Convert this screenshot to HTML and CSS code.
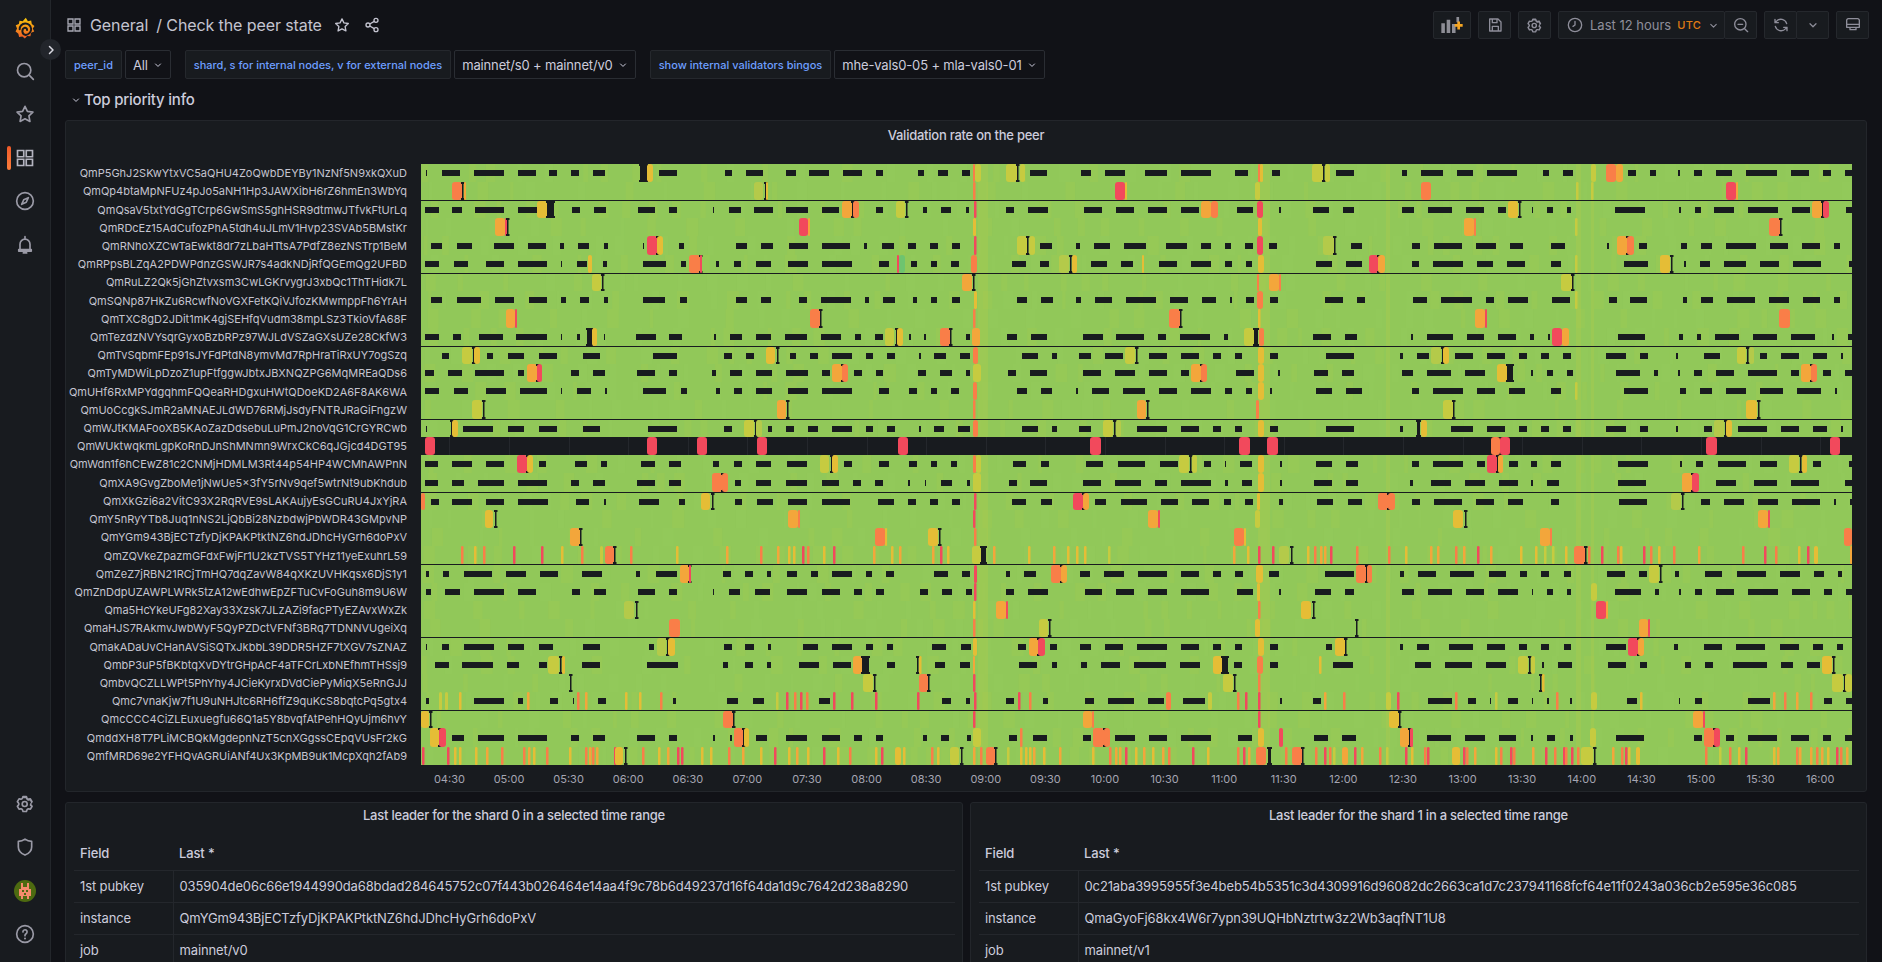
FILE: index.html
```html
<!DOCTYPE html>
<html lang="en">
<head>
    <meta charset="UTF-8">
    <title>Check the peer state - Dashboards - Grafana</title>
    <link rel="stylesheet" href="styles.css">
</head>
<body>
    <svg class="sprite" width="0" height="0">
        <symbol id="i-grid" viewBox="0 0 24 24"><path d="M3 3h7.500v7.500H3zM13.500 3H21v7.500h-7.500zM3 13.500h7.500V21H3zM13.500 13.500H21V21h-7.500z" fill="none" stroke="currentColor" stroke-width="2"/></symbol>
        <symbol id="i-search" viewBox="0 0 24 24"><circle cx="11" cy="11" r="8" fill="none" stroke="currentColor" stroke-width="2"/><path d="M17 17l5 5" stroke="currentColor" stroke-width="2" stroke-linecap="round"/></symbol>
        <symbol id="i-star" viewBox="0 0 24 24"><path d="M12 2.800l2.900 6 6.600.9-4.800 4.600 1.200 6.600-5.900-3.200-5.900 3.200 1.200-6.600-4.800-4.600 6.600-.9z" fill="none" stroke="currentColor" stroke-width="2" stroke-linejoin="round"/></symbol>
        <symbol id="i-share" viewBox="0 0 24 24"><circle cx="18" cy="5" r="3" fill="none" stroke="currentColor" stroke-width="2"/><circle cx="6" cy="12" r="3" fill="none" stroke="currentColor" stroke-width="2"/><circle cx="18" cy="19" r="3" fill="none" stroke="currentColor" stroke-width="2"/><path d="M8.600 10.500l6.800-4M8.600 13.500l6.800 4" stroke="currentColor" stroke-width="2"/></symbol>
        <symbol id="i-compass" viewBox="0 0 24 24"><circle cx="12" cy="12" r="10" fill="none" stroke="currentColor" stroke-width="2"/><path d="M16 8l-2.500 5.500L8 16l2.500-5.500z" fill="none" stroke="currentColor" stroke-width="2" stroke-linejoin="round"/></symbol>
        <symbol id="i-bell" viewBox="0 0 24 24"><path d="M12 2v2M6 17v-6a6 6 0 0 1 12 0v6M4.500 17.500h15v2h-15zM10 21.500h4" fill="none" stroke="currentColor" stroke-width="2" stroke-linecap="round" stroke-linejoin="round"/></symbol>
        <symbol id="i-cog" viewBox="0 0 24 24"><path fill="currentColor" d="M19.900 12.660a1 1 0 0 1 0-1.320l1.280-1.440a1 1 0 0 0 .12-1.170l-2-3.460a1 1 0 0 0-1.070-.48l-1.880.38a1 1 0 0 1-1.150-.66l-.61-1.830a1 1 0 0 0-.95-.68h-4a1 1 0 0 0-1 .68l-.56 1.830a1 1 0 0 1-1.150.66L5 4.790a1 1 0 0 0-1 .48L2 8.730a1 1 0 0 0 .1 1.170l1.270 1.440a1 1 0 0 1 0 1.320L2.100 14.100a1 1 0 0 0-.1 1.170l2 3.460a1 1 0 0 0 1.070.48l1.880-.38a1 1 0 0 1 1.150.66l.61 1.830a1 1 0 0 0 1 .68h4a1 1 0 0 0 .95-.68l.61-1.830a1 1 0 0 1 1.150-.66l1.880.38a1 1 0 0 0 1.070-.48l2-3.460a1 1 0 0 0-.12-1.170ZM18.410 14l.8.9-1.280 2.220-1.180-.24a3 3 0 0 0-3.450 2L12.920 20h-2.560L10 18.860a3 3 0 0 0-3.450-2l-1.180.24-1.300-2.210.8-.9a3 3 0 0 0 0-4l-.8-.9 1.280-2.200 1.180.24a3 3 0 0 0 3.450-2L10.360 5h2.560l.38 1.140a3 3 0 0 0 3.450 2l1.180-.24 1.280 2.220-.8.9a3 3 0 0 0 0 3.980Zm-6.770-6a4 4 0 1 0 4 4 4 4 0 0 0-4-4Zm0 6a2 2 0 1 1 2-2 2 2 0 0 1-2 2Z"/></symbol>
        <symbol id="i-shield" viewBox="0 0 24 24"><path d="M12 2.500c2.500 1.800 5 2.600 8 2.800V12c0 4.500-3.200 7.800-8 9.700C7.200 19.800 4 16.500 4 12V5.300c3-.2 5.500-1 8-2.800z" fill="none" stroke="currentColor" stroke-width="2" stroke-linejoin="round"/></symbol>
        <symbol id="i-help" viewBox="0 0 24 24"><circle cx="12" cy="12" r="10" fill="none" stroke="currentColor" stroke-width="2"/><path d="M9.500 9.500a2.500 2.500 0 1 1 3.800 2.100c-.8.500-1.300 1-1.300 2v.4" fill="none" stroke="currentColor" stroke-width="2" stroke-linecap="round"/><circle cx="12" cy="17.300" r="1.200" fill="currentColor"/></symbol>
        <symbol id="i-down" viewBox="0 0 24 24"><path d="M6 9.500l6 6 6-6" fill="none" stroke="currentColor" stroke-width="2.400" stroke-linecap="round" stroke-linejoin="round"/></symbol>
        <symbol id="i-right" viewBox="0 0 24 24"><path d="M9 5l7 7-7 7" fill="none" stroke="currentColor" stroke-width="3" stroke-linecap="round" stroke-linejoin="round"/></symbol>
        <symbol id="i-save" viewBox="0 0 24 24"><path d="M4 3h12.500L21 7.500V21H4zM8 3v5.500h7V3M8 21v-7h9v7" fill="none" stroke="currentColor" stroke-width="2" stroke-linejoin="round"/></symbol>
        <symbol id="i-clock" viewBox="0 0 24 24"><circle cx="12" cy="12" r="10" fill="none" stroke="currentColor" stroke-width="2"/><path d="M12 6.500V12l-3 2" fill="none" stroke="currentColor" stroke-width="2" stroke-linecap="round"/></symbol>
        <symbol id="i-zoom" viewBox="0 0 24 24"><circle cx="11" cy="11" r="8.500" fill="none" stroke="currentColor" stroke-width="2"/><path d="M7.500 11h7M17.500 17.500l4.500 4.500" stroke="currentColor" stroke-width="2" stroke-linecap="round"/></symbol>
        <symbol id="i-sync" viewBox="0 0 24 24"><path d="M20.500 10A9 9 0 0 0 5 6.500L3 8.500M3.500 14A9 9 0 0 0 19 17.500l2-2M3 3.500v5h5M21 20.500v-5h-5" fill="none" stroke="currentColor" stroke-width="2" stroke-linecap="round" stroke-linejoin="round"/></symbol>
        <symbol id="i-tv" viewBox="0 0 24 24"><path d="M5 2.500h14a2.500 2.500 0 0 1 2.500 2.500v10.500h-19V5A2.500 2.500 0 0 1 5 2.500zM2.500 11h19M7.500 15.500v3.500h9v-3.500" fill="none" stroke="currentColor" stroke-width="2" stroke-linejoin="round"/></symbol>
    </svg>

    <div class="app">
        <nav class="sidebar">
            <div class="side-group">
                <a class="logo">
                    <svg viewBox="0 0 24 28" width="20" height="23">
                        <defs><linearGradient id="flame" x1="0" y1="1" x2="0" y2="0"><stop offset="0" stop-color="#f05a28"/><stop offset="1" stop-color="#fbca0a"/></linearGradient></defs>
                        <path fill="url(#flame)" d="M13 1l2.500 4.200 4-.8.800 4 3.200 2.600-2 3 1.700 3.800-3.800 1.500-.8 4-4-.2-2.800 3-3-2.500-4 .7-.9-4L.500 17.500 2.300 14 .7 10l3.800-1.400.8-3.900 3.900.6z"/>
                        <path fill="none" stroke="#181b1f" stroke-width="2.400" stroke-linecap="round" d="M5.500 15a7 7 0 1 1 7.500 6.800 4.500 4.500 0 0 1-1-8.800 2.600 2.600 0 0 1 2.500 2.800"/>
                    </svg>
                </a>
                <a class="side-item"><svg width="20" height="20"><use href="#i-search"/></svg></a>
                <a class="side-item"><svg width="20" height="20"><use href="#i-star"/></svg></a>
                <a class="side-item current"><svg width="20" height="20"><use href="#i-grid"/></svg></a>
                <a class="side-item"><svg width="20" height="20"><use href="#i-compass"/></svg></a>
                <a class="side-item"><svg width="20" height="20"><use href="#i-bell"/></svg></a>
            </div>
            <div class="side-group">
                <a class="side-item"><svg width="20" height="20"><use href="#i-cog"/></svg></a>
                <a class="side-item"><svg width="20" height="20"><use href="#i-shield"/></svg></a>
                <a class="side-item">
                    <svg viewBox="0 0 22 22" width="22" height="22">
                        <circle cx="11" cy="11" r="11" fill="#4d6a10"/>
                        <path fill="#f58b6c" d="M7 3h2v4h4V3h2v6h2v7h-2v3h-2v-3H9v3H7v-3H5V9h2z"/>
                        <path fill="#4d6a10" d="M8 10h2v2H8zM12 10h2v2h-2zM10 13h2v2h-2z"/>
                    </svg>
                </a>
                <a class="side-item"><svg width="20" height="20"><use href="#i-help"/></svg></a>
            </div>
            <span class="side-toggle"><svg width="12" height="12"><use href="#i-right"/></svg></span>
        </nav>

        <main class="main">
            <header class="toolbar">
                <div class="crumbs">
                    <svg class="crumb-icon" width="16" height="16"><use href="#i-grid"/></svg>
                    <span class="crumb-folder">General</span>
                    <span class="crumb-name">/ Check the peer state</span>
                    <svg class="crumb-star" width="16" height="16"><use href="#i-star"/></svg>
                    <svg class="crumb-share" width="16" height="16"><use href="#i-share"/></svg>
                </div>
                <div class="actions">
                    <button class="tool tool-add">
                        <svg viewBox="0 0 24 18" width="22" height="16">
                            <path fill="#8e8e96" d="M0 7h4v11H0zM6 3h4v15H6zM12 8h4v10h-4zM17 0h3v6h-3z"/>
                            <path fill="#f5a623" d="M18 5h3v3h3v3h-3v3h-3v-3h-3V8h3z"/>
                        </svg>
                    </button>
                    <button class="tool"><svg width="16" height="16"><use href="#i-save"/></svg></button>
                    <button class="tool"><svg width="17" height="17"><use href="#i-cog"/></svg></button>
                    <div class="tool-group">
                        <button class="tool tool-time">
                            <svg width="16" height="16"><use href="#i-clock"/></svg>
                            <span>Last 12 hours</span>
                            <span class="utc">UTC</span>
                            <svg width="11" height="11"><use href="#i-down"/></svg>
                        </button>
                        <button class="tool tool-zoom"><svg width="16" height="16"><use href="#i-zoom"/></svg></button>
                    </div>
                    <div class="tool-group">
                        <button class="tool tool-sync"><svg width="16" height="16"><use href="#i-sync"/></svg></button>
                        <button class="tool tool-more"><svg width="12" height="12"><use href="#i-down"/></svg></button>
                    </div>
                    <button class="tool"><svg width="16" height="16"><use href="#i-tv"/></svg></button>
                </div>
            </header>

            <section class="variables">
                <div class="variable">
                    <label class="var-label">peer_id</label>
                    <button class="var-value">All <svg width="10" height="10"><use href="#i-down"/></svg></button>
                </div>
                <div class="variable">
                    <label class="var-label">shard, s for internal nodes, v for external nodes</label>
                    <button class="var-value">mainnet/s0 + mainnet/v0 <svg width="10" height="10"><use href="#i-down"/></svg></button>
                </div>
                <div class="variable">
                    <label class="var-label">show internal validators bingos</label>
                    <button class="var-value">mhe-vals0-05 + mla-vals0-01 <svg width="10" height="10"><use href="#i-down"/></svg></button>
                </div>
            </section>

            <h2 class="row-title"><svg width="10" height="10"><use href="#i-down"/></svg> Top priority info</h2>

            <section class="panel panel-chart">
                <h3 class="panel-title">Validation rate on the peer</h3>
                <div class="plot">
                    <div class="peer-labels" id="peerLabels"></div>
                    <canvas id="timeline" width="1432" height="601"></canvas>
                    <div class="time-axis" id="timeAxis"></div>
                </div>
            </section>

            <div class="panel-grid">
                <section class="panel">
                    <h3 class="panel-title">Last leader for the shard 0 in a selected time range</h3>
                    <table class="fields">
                        <thead><tr><th>Field</th><th>Last *</th></tr></thead>
                        <tbody>
                            <tr><td>1st pubkey</td><td>035904de06c66e1944990da68bdad284645752c07f443b026464e14aa4f9c78b6d49237d16f64da1d9c7642d238a8290</td></tr>
                            <tr><td>instance</td><td>QmYGm943BjECTzfyDjKPAKPtktNZ6hdJDhcHyGrh6doPxV</td></tr>
                            <tr><td>job</td><td>mainnet/v0</td></tr>
                        </tbody>
                    </table>
                </section>
                <section class="panel">
                    <h3 class="panel-title">Last leader for the shard 1 in a selected time range</h3>
                    <table class="fields">
                        <thead><tr><th>Field</th><th>Last *</th></tr></thead>
                        <tbody>
                            <tr><td>1st pubkey</td><td>0c21aba3995955f3e4beb54b5351c3d4309916d96082dc2663ca1d7c237941168fcf64e11f0243a036cb2e595e36c085</td></tr>
                            <tr><td>instance</td><td>QmaGyoFj68kx4W6r7ypn39UQHbNztrtw3z2Wb3aqfNT1U8</td></tr>
                            <tr><td>job</td><td>mainnet/v1</td></tr>
                        </tbody>
                    </table>
                </section>
            </div>
        </main>
    </div>

    <script src="chart.js"></script>
</body>
</html>
```

FILE: styles.css
```css
* {
    box-sizing: border-box;
}
body {
    margin: 0;
    background: #111217;
    color: #ccccdc;
    font-family: Inter, "Liberation Sans", sans-serif;
    font-size: 13px;
}
.sprite {
    position: absolute;
}
.app {
    display: flex;
    height: 100vh;
    overflow: hidden;
}
.sidebar {
    position: relative;
    flex: 0 0 51px;
    display: flex;
    flex-direction: column;
    justify-content: space-between;
    background: #181b1f;
    border-right: 1px solid #23262b;
    padding-top: 17px;
    padding-bottom: 6px;
    z-index: 2;
}
.side-group {
    display: flex;
    flex-direction: column;
    align-items: center;
}
.logo {
    height: 23px;
    margin-bottom: 9px;
}
.side-item {
    position: relative;
    width: 100%;
    height: 43.500px;
    display: flex;
    align-items: center;
    justify-content: center;
    color: #9a9aa6;
}
.side-item.current {
    color: #b4b4c0;
}
.side-item.current::before {
    content: "";
    position: absolute;
    left: 7px;
    top: 10px;
    bottom: 10px;
    width: 4px;
    border-radius: 2px;
    background: linear-gradient(#f05a28, #fb7e3c);
}
.side-toggle {
    position: absolute;
    left: 40px;
    top: 39px;
    width: 21px;
    height: 21px;
    display: flex;
    align-items: center;
    justify-content: center;
    border-radius: 50%;
    background: #22252b;
    color: #d8d8e0;
}
.main {
    flex: 1;
    min-width: 0;
    padding: 0 15px 0 14px;
}
.toolbar {
    display: flex;
    justify-content: space-between;
    align-items: center;
    height: 50px;
}
.crumbs {
    display: flex;
    align-items: center;
    font-size: 16px;
    letter-spacing: -0.1px;
    color: #c4c4d0;
}
.crumb-icon {
    margin-left: 1px;
    margin-right: 8px;
    color: #a8a8b4;
}
.crumb-folder {
    margin-right: 8px;
}
.crumb-star {
    margin-left: 12px;
    margin-right: 14px;
}
.actions {
    display: flex;
    gap: 7px;
    margin-right: -2px;
}
.tool {
    height: 28px;
    min-width: 33px;
    display: flex;
    align-items: center;
    justify-content: center;
    gap: 7px;
    padding: 0;
    background: #181b1f;
    border: 1px solid #25282d;
    border-radius: 2px;
    color: #8e8e9a;
    font-family: inherit;
    font-size: 13px;
}
.tool-add {
    width: 38px;
}
.tool-group {
    display: flex;
}
.tool-group .tool + .tool {
    margin-left: -1px;
}
.tool-time {
    width: 167px;
    justify-content: flex-start;
    padding-left: 8px;
}
.tool-zoom {
    width: 33px;
}
.tool-sync {
    width: 32px;
}
.tool-more {
    width: 31px;
}
.utc {
    color: #e07b14;
    font-size: 11px;
    font-weight: 500;
    letter-spacing: 0.3px;
    margin-left: -1px;
}
.variables {
    display: flex;
    gap: 14px;
    height: 29px;
}
.variable {
    display: flex;
    gap: 3px;
}
.var-label {
    display: flex;
    align-items: center;
    padding: 0 8px;
    background: #181b1f;
    border: 1px solid #25282d;
    border-radius: 2px;
    color: #6e9fff;
    font-size: 11px;
    font-weight: 500;
}
.var-value {
    display: flex;
    align-items: center;
    gap: 5px;
    padding: 0 7px;
    background: #111217;
    border: 1px solid #2a2d33;
    border-radius: 2px;
    color: #ccccdc;
    font-family: inherit;
    font-size: 13px;
    letter-spacing: -0.15px;
}
.row-title {
    display: flex;
    align-items: center;
    gap: 3px;
    height: 41px;
    margin: 0;
    padding-left: 6px;
    font-size: 15px;
    font-weight: 500;
    letter-spacing: -0.2px;
}
.panel {
    background: #181b1f;
    border: 1px solid #23262b;
    border-radius: 3px;
}
.panel-chart {
    height: 672px;
    margin-bottom: 10px;
}
.panel-title {
    margin: 0;
    height: 28px;
    line-height: 28px;
    text-align: center;
    font-size: 13px;
    font-weight: 500;
    letter-spacing: -0.25px;
}
.plot {
    display: grid;
    grid-template-columns: 341px 1432px;
    column-gap: 13px;
    margin-top: 15px;
}
.peer-labels {
    display: grid;
    grid-template-rows: repeat(33, 1fr);
    height: 601px;
    font-size: 11px;
    color: #c4c4d0;
}
.peer-label {
    display: flex;
    align-items: center;
    justify-content: flex-end;
    white-space: nowrap;
}
#timeline {
    display: block;
}
.time-axis {
    position: relative;
    grid-column: 2;
    height: 26px;
    font-size: 11px;
    color: #a5a5b2;
}
.time-tick {
    position: absolute;
    top: 7px;
    transform: translateX(-50%);
}
.panel-grid {
    display: grid;
    grid-template-columns: 898px 897px;
    gap: 7px;
}
.panel-grid .panel-title {
    height: 24px;
    line-height: 24px;
    margin-bottom: 9px;
}
.fields {
    width: calc(100% - 15px);
    margin: 0 8px;
    border-collapse: collapse;
    table-layout: fixed;
    font-size: 13px;
    letter-spacing: -0.12px;
}
.fields th {
    height: 34px;
    padding: 0 6px;
    text-align: left;
    font-weight: 500;
}
.fields td {
    height: 32px;
    padding: 0 6px;
    border-top: 1px solid #24272c;
}
.fields th:first-child,
.fields td:first-child {
    width: 99px;
}
.fields td + td {
    border-left: 1px solid #24272c;
}
```

FILE: chart.js
```js
// state timeline: each row is a peer, values read off as pixel ranges on the page
const X0 = 420, Y0 = 164, PITCH = 18.22;
const GREEN = '#91c859', PANEL = '#181b1f';
const COLORS = {
    r: '#f2495c', o: '#f97e48', a: '#f3a63b', y: '#e5bd36', l: '#c6cb40', g: '#b4ca4a', t: '#6ec46f'
};

const peers = [
 ['QmP5GhJ2SKwYtxVC5aQHU4ZoQwbDEYBy1NzNf5N9xkQXuD',
  '426-427 442-460 474-504 518-536 549-557 571-579 593-605 659-677 725-732 746-763 786-796 809-829 843-862 876-883 918-924 938-948 962-970 1030-1047 1081-1091 1105-1125 1145-1167 1181-1211 1235-1248 1272-1280 1336-1354 1402-1407 1421-1443 1457-1473 1487-1517 1543-1549 1563-1573 1628-1636 1650-1656 1678-1680 1694-1702 1716-1732 1746-1777 1791-1809 1823-1831 1845-1852',
  'k640-647 y647-653 o973-975 l975-981 l1006-1017 k1017 l1020-1025 o1258 y1260-1263 l1312-1323 k1323 l1325-1330 l1591-1596 o1606-1616 a1616-1623'],
 ['QmQp4btaMpNFUz4pJo5aNH1Hp3JAWXibH6rZ6hmEn3WbYq', '',
  'o452-462 k462 a464-466 g754-763 k765 y766-768 o973 r1115-1125 y1125-1127 l1255-1260 o1421-1431 l1576 l1591 r1726-1736 a1736-1738'],
 ['QmQsaV5txtYdGgTCrp6GwSmS5ghHSR9dtmwJTfvkFtUrLq',
  '425-439 452-462 475-504 518-537 572-580 594-606 638-655 669-677 713-714 729-741 754-773 786-808 822-839 876-883 923-927 941-951 966-969 1006-1014 1028-1048 1084-1102 1116-1134 1148-1167 1181-1199 1237-1253 1279-1281 1313-1329 1343-1354 1402-1414 1428-1452 1466-1484 1498-1506 1532-1533 1547-1553 1567-1571 1615-1645 1679-1681 1695-1701 1714-1734 1748-1778 1792-1810 1846-1852',
  'y537-547 k547-554 a842-852 k852 o853-859 l896-905 k906 r974 a1201-1211 o1211-1218 r1257-1263 y1508-1518 k1519 a1812-1822 k1822 r1823-1829'],
 ['QmRDcEz15AdCufozPhA5tdh4uJLmV1Hvp23SVAb5BMstKr', '',
  'a495-505 r505-507 k507 r799-808 a808-810 y973-976 y1258-1262 a1464-1474 o1474-1476 l1575 o1769-1780 k1780'],
 ['QmRNhoXZCwTaEwkt8dr7zLbaHTtsA7PdfZ8ezNSTrp1BeM',
  '431-442 457-472 494-514 528-546 560-564 578-589 604-608 643-644 679-684 736-747 761-773 789-808 822-850 864-867 882-894 908-916 930-938 952-960 1040-1052 1076-1080 1094-1110 1124-1146 1166-1187 1201-1211 1225-1231 1245-1253 1269-1277 1351-1362 1412-1420 1434-1462 1476-1496 1510-1523 1551-1565 1607-1609 1639-1647 1681-1687 1701-1712 1726-1756 1770-1788 1802-1820 1834-1840',
  'r647-657 k657 y657-663 r974 l1017-1027 k1027 l1029-1035 r1257-1263 g1323-1334 k1334 a1617-1627 k1627 o1627-1634'],
 ['QmRPpsBLZqA2PDWPdnzGSWJR7s4adkNDjRfQGEmQg2UFBD',
  '425-439 454-468 486-504 518-547 561-562 577-587 603-607 643-666 681-686 716-719 734-741 756-771 788-808 822-852 879-889 911-917 931-937 951-959 1012-1026 1040-1049 1091-1107 1121-1133 1159-1177 1191-1211 1225-1232 1246-1252 1316-1332 1346-1362 1412-1419 1433-1463 1477-1493 1507-1525 1551-1561 1624-1648 1684-1686 1700-1710 1724-1746 1760-1779 1793-1821 1849-1852',
  'y588-592 o689-700 k700 r700-702 r897-899 t899-905 o971-977 g1059-1069 k1070 y1072-1077 y1142-1144 y1258-1264 r1369-1378 k1378 a1378-1385 l1575 y1660-1670 k1671'],
 ['QmRuLZ2Qk5jGhZtvxsm3CwLGKrvygrJ3xbQc1ThTHidk7L', '',
  'l592-601 k602 a962-972 k973 o1257-1259 a1269-1279 o1279-1281 l1561-1572 k1572'],
 ['QmSQNp87HkZu6RcwfNoVGXFetKQiVJfozKMwmppFh6YrAH',
  '431-442 457-481 495-514 529-547 561-566 580-589 604-608 643-665 680-687 736-747 761-771 799-807 821-851 865-869 883-895 913-917 931-937 952-960 1017-1027 1041-1053 1076-1081 1095-1112 1126-1156 1170-1188 1202-1216 1230-1232 1246-1254 1270-1278 1325-1343 1357-1365 1413-1427 1441-1472 1486-1494 1508-1528 1552-1570 1609-1617 1630-1647 1683-1687 1701-1713 1727-1755 1769-1789 1803-1820 1834-1840',
  'y974-977 o1257-1263 l1575'],
 ['QmTXC8gD2JDit1mK4gjSEHfqVudm38mpLSz3TkioVfA68F', '',
  'a506-515 r515-517 o810-820 k820 o973 y1258 o1169-1180 k1180 a1475-1485 r1485-1487 o1779-1790'],
 ['QmTezdzNVYsqrGyxoBzbRPz97WJLdVSZaGXsUZe28CkfW3',
  '425-439 453-461 479-503 516-547 561-562 577-580 604-605 636-656 669-682 714-716 730-742 756-771 785-807 821-841 855-861 875-883 909-911 924-926 966-970 1007-1017 1031-1047 1083-1103 1116-1144 1158-1166 1180-1210 1224-1228 1313-1331 1345-1357 1411-1413 1427-1453 1467-1484 1498-1516 1530-1534 1548-1550 1618-1645 1679-1683 1697-1701 1715-1739 1753-1777 1791-1815 1832-1834 1848-1852',
  'k587-592 y592-597 l885-894 k896 y897-903 o940-950 k950 a972-980 l1244-1254 k1254-1258 o1259-1264 r1552-1562 a1562-1569'],
 ['QmTvSqbmFEp91sJYFdPtdN8ymvMd7RpHraTiRxUY7ogSzq',
  '442-449 487-493 508-524 539-557 583-600 653-677 724-732 746-754 790-796 810-818 832-852 866-873 887-895 919-921 934-946 960-970 1022-1038 1052-1057 1079-1091 1105-1123 1149-1167 1181-1199 1213-1221 1235-1242 1270-1278 1326-1354 1400-1403 1417-1429 1455-1473 1487-1505 1519-1527 1541-1549 1563-1571 1606-1626 1640-1648 1676-1678 1704-1720 1760-1767 1781-1799 1813-1827 1841-1843',
  'l462-472 k473 y474-480 y766-775 k777 o973-978 l1125-1135 k1136 y1258-1264 g1431-1441 k1442 y1443-1449 l1737-1746 k1747 g1749-1754'],
 ['QmTyMDWiLpDzoZ1upFtfggwJbtxJBXNQZPG6MqMREaQDs6',
  '425-434 448-462 475-504 518-524 571-579 593-605 637-655 669-677 712-716 730-742 756-772 786-808 822-830 854-862 876-883 918-926 940-952 966-970 1008-1016 1030-1047 1083-1101 1115-1135 1149-1167 1181-1189 1236-1254 1278-1280 1314-1328 1342-1354 1402-1413 1427-1451 1465-1485 1531-1533 1547-1553 1567-1573 1616-1640 1654-1658 1678-1680 1694-1702 1716-1734 1748-1777 1791-1799 1823-1831 1845-1852',
  'a527-537 k537 r537-542 a832-842 k842 o842-848 l973-981 a1191-1201 k1201 o1201-1207 y1258-1264 y1497-1507 k1507-1513 a1801-1811 k1811 o1811-1817'],
 ['QmUHf6RxMPYdgqhmFQQeaRHDgxuHWtQDoeKD2A6F8AK6WA',
  '425-439 454-468 486-506 520-547 561-562 577-591 605-607 643-666 681-687 716-720 734-742 756-772 788-808 822-852 879-889 909-917 931-937 951-959 1017-1027 1041-1052 1076-1078 1092-1109 1123-1145 1159-1177 1191-1211 1225-1232 1246-1252 1270-1272 1316-1332 1346-1362 1412-1419 1433-1463 1477-1495 1509-1525 1551-1561 1624-1648 1680-1686 1700-1712 1726-1746 1760-1783 1797-1821 1835-1837',
  'o973-977 y1258-1264 l1575'],
 ['QmUoCcgkSJmR2aMNAEJLdWD76RMjJsdyFNTRJRaGiFngzW', '',
  'l472-482 k483 a777-786 k787 o973 a1137-1146 k1147 o1256-1259 l1443-1453 k1453 y1746-1757 k1758'],
 ['QmWJtKMAFooXB5KAoZazDdsebuLuPmJ2noVqG1CrGYRCwb',
  '426-427 463-493 508-524 539-557 583-600 648-677 724-732 768-772 786-794 808-818 832-852 866-873 887-895 919-921 934-944 958-970 1022-1038 1052-1057 1079-1091 1137-1167 1181-1199 1213-1221 1235-1242 1270-1278 1326-1354 1400-1403 1451-1473 1487-1505 1519-1527 1541-1549 1563-1571 1606-1626 1640-1648 1676-1678 1704-1712 1738-1767 1781-1799 1813-1827 1841-1843',
  'k451 y452-458 l744-754 k755 g756-762 o973-978 l1103-1113 k1114 g1116-1121 y1258-1264 k1417-1420 y1421-1427 g1714-1724 k1725 y1726-1732'],
 ['QmWUktwqkmLgpKoRnDJnShMNmn9WrxCkC6qJGjcd4DGT95', '',
  'r425-435 r647-657 r697-707 r757-767 r898-908 r1090-1101 r1239-1250 r1267-1278 o1491-1500 r1500-1510 r1706-1717 r1830-1840'],
 ['QmWdn1f6hCEwZ81c2CNMjHDMLM3Rt44p54HP4WCMhAWPnN',
  '425-438 452-472 486-504 539-546 575-587 601-607 641-655 669-681 713-719 734-742 756-771 787-807 844-852 879-889 909-917 931-937 951-957 1013-1026 1041-1049 1086-1103 1118-1145 1160-1178 1204-1211 1225-1226 1240-1252 1280-1282 1316-1332 1346-1358 1412-1419 1433-1463 1477-1485 1509-1518 1531-1537 1551-1561 1618-1648 1680-1682 1696-1703 1718-1746 1760-1777 1813-1821 1849-1852',
  'r517-527 k527 y527-533 l820-829 k831 y832-838 o973-976 l976-981 l1179-1189 k1190 l1192-1197 y1258-1264 r1487-1497 k1497 a1498-1503 l1789-1799 k1800 y1802-1807'],
 ['QmXA9GvgZboMe1jNwUe5x3fY5rNv9qef5wtrNt9ubKhdub',
  '425-438 452-464 478-504 518-547 571-579 593-605 637-655 669-681 735-741 756-771 786-807 822-839 853-861 875-883 908-910 925-926 941-952 967-970 1009-1017 1030-1047 1083-1101 1115-1141 1155-1167 1181-1211 1225-1228 1242-1252 1280-1282 1314-1332 1346-1358 1410-1413 1431-1451 1465-1485 1499-1518 1531-1533 1547-1559 1618-1646 1716-1736 1754-1777 1791-1819 1845-1852',
  'o712-722 k722 o722-728 l973-981 y1258-1264 a1682-1692 k1692 r1692-1699'],
 ['QmXkGzi6a2VitC93X2RqRVE9sLAKAujyEsGCuRU4JxYjRA',
  '431-439 452-472 486-504 518-548 576-589 604-606 639-659 679-685 735-742 757-773 788-807 822-850 878-894 908-916 930-938 952-960 1012-1026 1041-1052 1095-1106 1121-1147 1161-1178 1192-1209 1224-1231 1245-1253 1279-1283 1317-1333 1348-1362 1412-1420 1434-1462 1476-1494 1508-1523 1551-1559 1619-1647 1701-1710 1724-1744 1758-1778 1792-1820 1834-1836 1850-1852',
  'o421-425 y701-710 k712 r974 r1073-1083 k1083 a1083-1089 y1257-1260 o1378-1388 k1388 o1388-1395 g1671-1681 k1682'],
 ['QmY5nRyYTb8Juq1nNS2LjQbBi28NzbdwjPbWDR43GMpvNP', '',
  'y485-493 k495 a788-798 o798-800 r973 a1148-1158 r1158-1160 l1255-1260 y1453-1463 k1465 a1758-1768 r1768-1770'],
 ['QmYGm943BjECTzfyDjKPAKPtktNZ6hdJDhcHyGrh6doPxV', '',
  'a570-580 k580 o875-885 y885-887 y928-938 k939 o974 o1234-1244 y1244-1246 a1540-1550 o1550-1552 o1844-1852'],
 ['QmZQVkeZpazmGFdxFwjFr1U2kzTVS5TYHz11yeExuhrL59', '',
  'o461 y474 o483 r513 r541 y561 o581 l600-603 o605-614 k614 o630 y676 a726 o760 a777 y788 y793 r802 o807 y823 r833 a873 y891 a899 a932 r940 y947 l972-981 k981-986 a993 y1028 a1053 y1067 y1076 y1084 l1108 a1233 y1247 r1258 r1272 g1279-1289 k1291 y1307 o1314 a1320 a1324 r1330 o1356 o1388 y1405 a1430 a1437 o1455 a1463 r1477 a1490 y1520 y1535 l1544 l1552 y1565 o1574-1585 k1585 o1588 r1601 o1617 y1620 r1643 o1650 y1658 o1673 a1698 o1742 r1764 o1775 y1798 r1807 y1814-1818 a1850'],
 ['QmZeZ7jRBN21RCjTmHQ7dqZavW84qXKzUVHKqsx6DjS1y1',
  '426-429 443-449 464-492 506-526 540-558 582-602 636-640 656-677 723-731 745-753 767-771 787-797 811-818 832-852 866-872 886-894 934-948 962-970 1006-1010 1024-1036 1080-1090 1104-1124 1138-1167 1181-1199 1213-1221 1235-1243 1269-1279 1325-1354 1400-1404 1418-1436 1450-1474 1489-1506 1520-1527 1541-1549 1564-1571 1607-1625 1639-1647 1675-1679 1705-1722 1737-1766 1780-1800 1814-1824 1838-1842',
  'a680-689 k689 r689-691 r974-977 o1051-1061 k1061 a1061-1067 y1256-1263 o1356-1366 k1366 o1367-1372 l1649-1659 k1660'],
 ['QmZnDdpUZAWPLWRk5tzA12wEdhwEpZFTuCvFoGuh8m9U6W',
  '426-431 445-460 474-504 518-536 572-580 594-606 638-655 669-677 713-714 729-740 755-770 787-807 822-840 854-862 876-884 920-928 942-952 966-972 1006-1014 1028-1048 1085-1102 1116-1134 1148-1167 1181-1209 1237-1253 1279-1281 1315-1331 1345-1354 1402-1414 1428-1452 1466-1484 1498-1518 1532-1533 1547-1553 1567-1571 1615-1641 1655-1659 1679-1681 1695-1702 1716-1734 1748-1778 1792-1810 1824-1832 1846-1852',
  'r974 y1257-1260 l1591-1597'],
 ['Qma5HcYkeUFg82Xay33Xzsk7JLzAZi9facPTyEZAvxWxZk', '',
  'g624-634 k636 y973 a996-1006 r1006-1008 o1258 y1301-1311 k1313 r1596-1606 a1606-1608'],
 ['QmaHJS7RAkmvJwbWyF5QyPZDctVFNf3BRq7TDNNVUgeiXq', '',
  'o669-680 o973 l1039-1048 k1049 y1255-1260 k1356 a1639-1648 r1648-1650'],
 ['QmakADaUvCHanAVSiSQTxJkbbL39DDR5HZF7tXGV7sZNAZ',
  '426-427 442-449 464-494 508-524 539-553 583-600 649-654 724-732 745-754 768-771 803-818 832-852 866-873 887-893 932-946 961-971 1018-1026 1050-1057 1080-1091 1105-1123 1137-1167 1181-1199 1213-1221 1235-1242 1270-1278 1326-1332 1400-1403 1417-1429 1449-1473 1487-1505 1519-1527 1541-1549 1564-1571 1606-1626 1674-1678 1704-1722 1736-1765 1780-1799 1813-1823 1837-1843',
  'g657-666 k667 y668-675 y973-977 a1029-1038 k1038 r1038-1045 y1258-1264 y1335-1345 k1345 r1628-1638 k1638 a1638-1644'],
 ['QmbP3uP5fBKbtqXvDYtrGHpAcF4aTFCrLxbNEfhmTHSsj9',
  '435-449 462-493 507-519 539-547 582-600 647-678 723-728 745-753 767-771 799-819 833-851 887-895 935-945 960-970 1019-1037 1052-1057 1081-1087 1101-1120 1134-1166 1180-1200 1234-1242 1270-1278 1333-1353 1415-1431 1445-1472 1486-1506 1542-1544 1558-1572 1608-1626 1640-1647 1685-1691 1705-1713 1733-1767 1781-1793 1807-1820',
  'l548-559 k560 y562-565 a853-862 k862-869 k917 y919 a973-975 y1213-1222 k1222-1228 o1257-1263 y1319 l1518-1528 k1529 l1531-1535 y1822-1832 k1833'],
 ['QmbvQCZLLWPt5PhYhy4JCieKyrxDVdCiePyMiqX5eRnGJJ', '',
  'k570 r973 l863-873 k874 o919-928 k928 l1223-1233 k1234 o1258 k1540 y1542 l1832-1843 k1844 l1845-1852'],
 ['Qmc7vnaKjw7f1U9uNHJtc6RH6ffZ9quKcS8bqtcPq5gtx4',
  '426-429 474-504 518-523 550-558 573-574 598-606 673-676 727-738 753-764 819-830 942-951 966-970 1006-1014 1043-1048 1085-1094 1108-1134 1148-1164 1183-1205 1280-1282 1313-1321 1428-1452 1468-1476 1490-1491 1508-1518 1532-1533 1547-1549 1570-1572 1627-1637 1679-1680 1695-1702 1748-1770 1824-1832 1846-1852',
  'l439-442 l445-448 y459 a527 o577 a585 y625 y639 o660 l776 r786 o794 r800 o806 r833 r851 r875 r917 r974 r1018 o1029 o1166-1171 l1208-1212 o1237 r1245 r1258 a1324 o1343 l1386-1391 r1397 o1455 l1495 o1556 l1591-1597 y1640 a1773 o1784 a1796 o1810'],
 ['QmcCCC4CiZLEuxuegfu66Q1a5Y8bvqfAtPehHQyUjm6hvY', '',
  'y421-429 k430 o723-733 k733 r973 a1083-1092 o1092-1094 r1258 y1389-1399 k1399 a1693-1703 r1703-1705'],
 ['QmddXH8T7PLiMCBQkMgdepnNzT5cnXGgssCEpqVUsFr2kG',
  '452-464 478-504 518-547 571-579 593-605 637-655 669-677 713-715 730-732 756-767 786-807 822-840 854-862 876-883 923-927 941-949 967-971 1009-1017 1033-1047 1083-1091 1115-1135 1149-1167 1181-1211 1238-1252 1314-1328 1342-1356 1427-1451 1465-1485 1499-1516 1531-1533 1547-1555 1570-1573 1616-1644 1694-1702 1726-1734 1748-1777 1791-1809 1823-1831 1845-1852',
  'y430-439 k439 r439-446 o734-743 k743 y744-749 l973-981 o1020 o1093-1104 k1104 o1104-1110 y1258-1264 r1279-1283 a1400-1409 k1409 r1410-1413 l1590-1596 o1704-1714 k1714 r1714-1720'],
 ['QmfMRD69e2YFHQvAGRUiANf4Ux3KpMB9uk1McpXqh2fAb9', '',
  'r422 r447 y454 y459 y475 a486 o501 o523 a528 y533 o546 y569 o585 a589 o592 a596 r614 y615-623 k625 o642 y658 a667 r677 r681 y701 y710 o728 a742 y760 r774 y788 a796 y807 r823 y837 o849 y875 r881 y895-901 y903 o931 y937 l950-959 k961 a973 o980 o986-995 k995 l1007 y1020 y1025 y1029 a1033 y1043 a1059 y1092 o1109 a1115 a1119 r1125 y1135 a1143 y1152 a1162 o1168 r1192 y1207 o1237 r1243 a1248 o1256-1266 k1268-1271 o1285 o1292-1302 k1302 o1315 r1324 o1329 l1333 a1342-1348 r1354 a1361 o1379 l1386 r1405 y1411 o1424 r1427 y1452-1460 r1463 o1466 a1474 y1495 o1500 r1510 o1513 a1532 r1545 o1554 r1563 o1565 r1571 o1577 l1581-1593 k1594 a1612 o1621 r1625 y1628 y1636-1640 o1705 l1719 o1729 y1738 r1745 y1773 a1777 o1796 a1799 a1810 o1816 a1821 y1827 r1836 o1840 a1846']
];

document.addEventListener('DOMContentLoaded', function() {
    const labels = document.getElementById('peerLabels');
    peers.forEach(peer => {
        const label = document.createElement('div');
        label.className = 'peer-label';
        label.textContent = peer[0];
        labels.appendChild(label);
    });

    const axis = document.getElementById('timeAxis');
    const ticks = [];
    for (let i = 0; i < 24; i++) {
        const mins = 4 * 60 + 30 + i * 30;
        const text = String(Math.floor(mins / 60)).padStart(2, '0') + ':' + String(mins % 60).padStart(2, '0');
        const left = 29.4 + i * 59.6;
        ticks.push(left);
        const tick = document.createElement('span');
        tick.className = 'time-tick';
        tick.style.left = left + 'px';
        tick.textContent = text;
        axis.appendChild(tick);
    }

    const ctx = document.getElementById('timeline').getContext('2d');

    function box(x0, x1, top, h, color) {
        const w = x1 - x0, r = Math.min(3, w / 2);
        ctx.fillStyle = color;
        ctx.beginPath();
        ctx.roundRect(x0 - X0, top, w, h, r);
        ctx.fill();
    }

    // small seeded random so the faint bands stay put between runs
    let seed = 1234;
    function rnd() {
        seed = (seed * 16807) % 2147483647;
        return seed / 2147483647;
    }

    peers.forEach((peer, i) => {
        let top = Math.round(i * PITCH - 0.4);
        if (i < 1) top = 0;
        const next = Math.round((i + 1) * PITCH - 0.4);
        if (i % 4 === 2) top += 1;
        const h = next - top;
        const dead = i === 15;

        if (dead) {
            ctx.fillStyle = 'rgba(204,204,220,0.07)';
            ticks.forEach(t => ctx.fillRect(Math.round(t), top, 1, h));
        } else {
            ctx.fillStyle = GREEN;
            ctx.fillRect(1, top, 1431, h);
            // faint yellow-ish bands in the healthy part
            let x = 2 + rnd() * 10;
            while (x < 1430) {
                const w = 3 + rnd() * 9;
                ctx.fillStyle = rnd() < 0.5 ? 'rgba(178,205,72,0.18)' : 'rgba(150,205,95,0.2)';
                ctx.fillRect(x, top, w, h);
                x += w + 8 + rnd() * 34;
            }
            [[558, 10], [838, 12], [966, 4], [1156, 5], [1171, 3]].forEach(c => {
                ctx.fillStyle = 'rgba(186,204,70,0.25)';
                ctx.fillRect(c[0], top, c[1], h);
            });
        }

        // dashes sit in the middle third of a row
        const dashTop = top + Math.round((h - 6) / 2);
        ctx.fillStyle = PANEL;
        peer[1].split(' ').filter(Boolean).forEach(tok => {
            const p = tok.split('-').map(Number);
            ctx.fillRect(p[0] - X0, dashTop, p[1] - p[0], 6);
        });

        // coloured blocks and the black i-beam gaps between them
        (peer[2] || '').split(' ').filter(Boolean).forEach(tok => {
            const m = tok.match(/^([a-z])(\d+)(?:-(\d+))?$/);
            const kind = m[1], a = +m[2];
            const b = m[3] ? +m[3] : a + (kind === 'k' ? 1.5 : 2.5);
            if (kind === 'k') {
                ctx.fillStyle = PANEL;
                ctx.fillRect(a - X0, top, b - a, h);
                ctx.fillRect(a - X0 - 1, top, b - a + 2, 2);
                ctx.fillRect(a - X0 - 1, top + h - 2, b - a + 2, 2);
            } else {
                box(a, b, top, h, COLORS[kind]);
            }
        });
    });
});
```
